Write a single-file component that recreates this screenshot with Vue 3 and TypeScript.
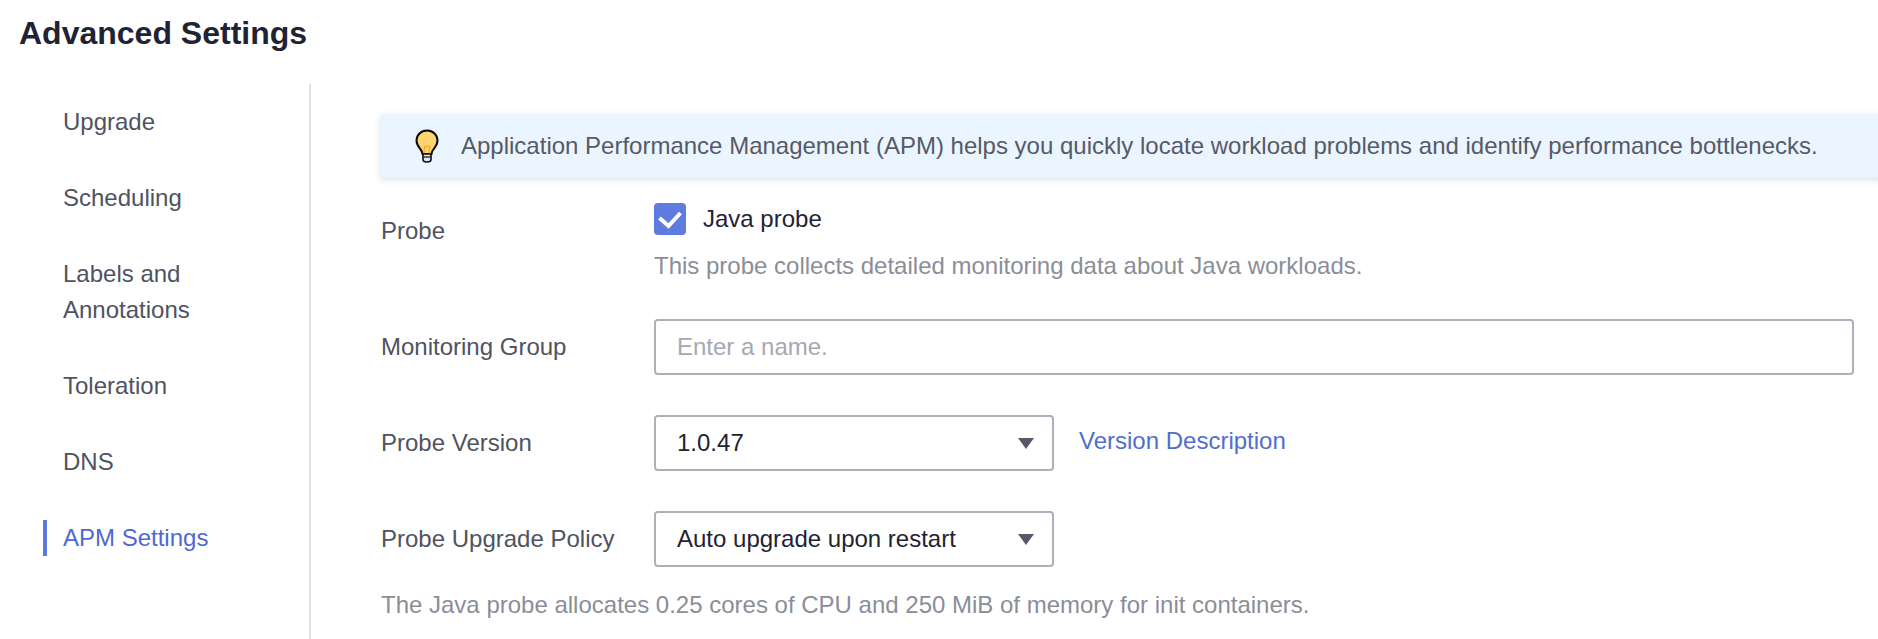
<script setup lang="ts">
const navItems: string[] = ['Upgrade', 'Scheduling', 'Labels and Annotations', 'Toleration', 'DNS', 'APM Settings']
const activeItem = 'APM Settings'
</script>

<template>
  <div class="page">
    <h1 class="title">Advanced Settings</h1>
    <div class="body">
      <nav class="nav">
        <a v-for="item in navItems" :key="item" class="nav-item" :class="{ active: item === activeItem }">{{ item }}</a>
      </nav>
      <main class="main">
        <div class="banner">
          <svg class="bulb" width="24" height="34" viewBox="0 0 24 34" aria-hidden="true">
            <path d="M12 1.500C5.900 1.500 1.500 6 1.500 11.500c0 4 2 6.300 3.800 8.500 1.200 1.500 1.900 2.800 2.200 5h9c.3-2.200 1-3.500 2.200-5 1.800-2.200 3.800-4.500 3.800-8.500C22.500 6 18.100 1.500 12 1.500z" fill="#ffd46e" stroke="#0b0b0b" stroke-width="2" />
            <path d="M9.500 17.500V25M14.500 17.500V25M8.500 17.500h7" fill="none" stroke="#f0ae38" stroke-width="1.500" />
            <path d="M8 25h8v5.500c0 1.500-1.300 2.500-4 2.500s-4-1-4-2.500z" fill="#e8e8e8" stroke="#0b0b0b" stroke-width="1.600" />
            <path d="M8.500 28h7" stroke="#0b0b0b" stroke-width="1.200" />
          </svg>
          <span>Application Performance Management (APM) helps you quickly locate workload problems and identify performance bottlenecks.</span>
        </div>

        <div class="row probe-row">
          <div class="label">Probe</div>
          <div class="field">
            <div class="check-line">
              <span class="checkbox">
                <svg width="24" height="20" viewBox="0 0 24 20" aria-hidden="true">
                  <path d="M1.500 9L10.500 17 22.500 4" fill="none" stroke="#fff" stroke-width="4" />
                </svg>
              </span>
              <span class="check-text">Java probe</span>
            </div>
            <div class="hint">This probe collects detailed monitoring data about Java workloads.</div>
          </div>
        </div>

        <div class="row">
          <div class="label">Monitoring Group</div>
          <div class="field">
            <input class="input" type="text" placeholder="Enter a name." />
          </div>
        </div>

        <div class="row">
          <div class="label">Probe Version</div>
          <div class="field inline">
            <div class="select">
              <span>1.0.47</span>
              <i class="arrow"></i>
            </div>
            <a class="link">Version Description</a>
          </div>
        </div>

        <div class="row">
          <div class="label">Probe Upgrade Policy</div>
          <div class="field inline">
            <div class="select">
              <span>Auto upgrade upon restart</span>
              <i class="arrow"></i>
            </div>
          </div>
        </div>

        <p class="note">The Java probe allocates 0.25 cores of CPU and 250 MiB of memory for init containers.</p>
      </main>
    </div>
  </div>
</template>

<style>
html, body { margin: 0; background: #fff; overflow: hidden; }
</style>

<style scoped>
.page {
  width: 1878px;
  height: 639px;
  overflow: hidden;
  font-family: "Liberation Sans", Arial, sans-serif;
  font-size: 24px;
  line-height: 36px;
  color: #4f5361;
  box-sizing: border-box;
}
.title {
  margin: 0;
  padding: 15px 0 0 19px;
  height: 84px;
  box-sizing: border-box;
  font-size: 32px;
  line-height: 36px;
  font-weight: 700;
  color: #1f2333;
}
.body {
  display: flex;
  height: 555px;
}
.nav {
  width: 309px;
  flex: none;
  border-right: 2px solid #e0e0e6;
  padding-top: 20px;
  display: flex;
  flex-direction: column;
  gap: 40px;
}
.nav-item {
  display: block;
  margin-left: 43px;
  padding-left: 16px;
  padding-right: 60px;
  border-left: 4px solid transparent;
}
.nav-item.active {
  border-left-color: #5b78e0;
  color: #4f68d4;
}
.main {
  flex: 1;
  min-width: 0;
  padding-left: 69px;
}
.banner {
  margin-top: 30px;
  height: 64px;
  display: flex;
  align-items: center;
  gap: 22px;
  padding-left: 35px;
  margin-right: -8px;
  background: #ebf5ff;
  border-radius: 5px;
  box-shadow: 0 2px 6px rgba(80, 90, 160, 0.2);
  color: #565a66;
  white-space: nowrap;
}
.bulb { flex: none; }
.row {
  display: flex;
  margin-top: 40px;
  padding-right: 24px;
}
.probe-row {
  margin-top: 25px;
}
.label {
  width: 274px;
  flex: none;
  line-height: 56px;
  padding-left: 1px;
  box-sizing: border-box;
}
.field {
  flex: 1;
  min-width: 0;
}
.inline {
  display: flex;
  align-items: flex-start;
}
.check-line {
  display: flex;
  align-items: center;
  height: 32px;
}
.checkbox {
  width: 32px;
  height: 32px;
  border-radius: 4px;
  background: #5e7ce0;
  display: flex;
  align-items: center;
  justify-content: center;
  flex: none;
}
.check-text {
  margin-left: 17px;
  color: #1f2333;
}
.hint {
  margin-top: 18px;
  line-height: 26px;
  color: #8a8e99;
}
.input {
  display: block;
  width: 100%;
  height: 56px;
  box-sizing: border-box;
  border: 2px solid #adb0b8;
  border-radius: 4px;
  padding: 0 21px;
  font: inherit;
  color: #1f2333;
  outline: none;
}
.input::placeholder {
  color: #a5a8b2;
  opacity: 1;
}
.select {
  width: 400px;
  height: 56px;
  box-sizing: border-box;
  border: 2px solid #adb0b8;
  border-radius: 4px;
  padding: 0 21px;
  display: flex;
  align-items: center;
  justify-content: space-between;
  color: #1f2333;
  flex: none;
}
.arrow {
  width: 0;
  height: 0;
  border-left: 8px solid transparent;
  border-right: 8px solid transparent;
  border-top: 11px solid #575a68;
  margin-right: -3px;
}
.link {
  margin-left: 25px;
  margin-top: 8px;
  color: #526ecc;
  line-height: 36px;
}
.note {
  margin: 20px 0 0;
  padding-left: 1px;
  color: #8a8e99;
  line-height: 36px;
}
</style>
